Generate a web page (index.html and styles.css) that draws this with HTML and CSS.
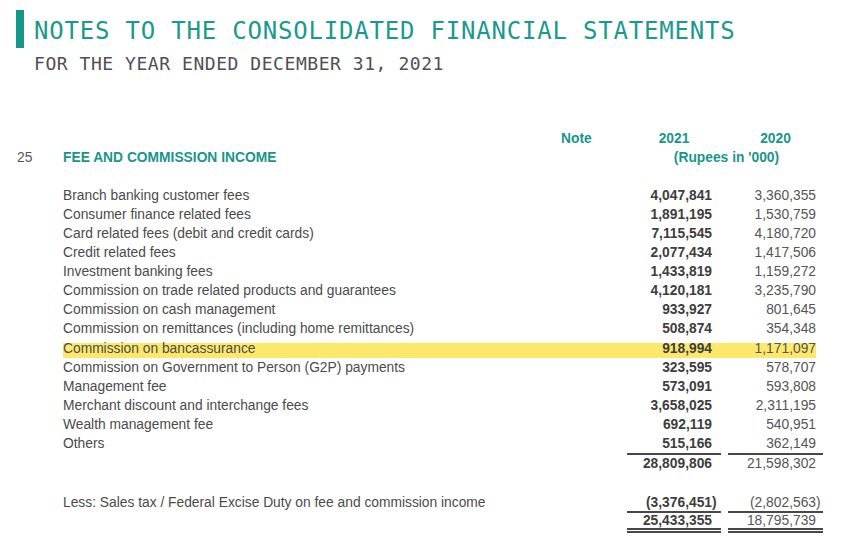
FILE: index.html
```html
<!DOCTYPE html>
<html>
<head>
<meta charset="utf-8">
<link rel="stylesheet" href="styles.css">
</head>
<body>
<div class="page">
  <header class="head">
    <div class="bar"></div>
    <div class="titles">
      <h1 class="title">NOTES TO THE CONSOLIDATED FINANCIAL STATEMENTS</h1>
      <div class="subtitle">FOR THE YEAR ENDED DECEMBER 31, 2021</div>
    </div>
  </header>

  <section class="table">
    <div class="row h1row">
      <div class="note">Note</div>
      <div class="c1 th">2021</div>
      <div class="c2 th">2020</div>
    </div>
    <div class="row h2row">
      <div class="num">25</div>
      <div class="lbl sec">FEE AND COMMISSION INCOME</div>
      <div class="units">(Rupees in '000)</div>
    </div>

    <div class="body">
      <div class="row"><div class="lbl">Branch banking customer fees</div><div class="c1 b">4,047,841</div><div class="c2">3,360,355</div></div>
      <div class="row"><div class="lbl">Consumer finance related fees</div><div class="c1 b">1,891,195</div><div class="c2">1,530,759</div></div>
      <div class="row"><div class="lbl">Card related fees (debit and credit cards)</div><div class="c1 b">7,115,545</div><div class="c2">4,180,720</div></div>
      <div class="row"><div class="lbl">Credit related fees</div><div class="c1 b">2,077,434</div><div class="c2">1,417,506</div></div>
      <div class="row"><div class="lbl">Investment banking fees</div><div class="c1 b">1,433,819</div><div class="c2">1,159,272</div></div>
      <div class="row"><div class="lbl">Commission on trade related products and guarantees</div><div class="c1 b">4,120,181</div><div class="c2">3,235,790</div></div>
      <div class="row"><div class="lbl">Commission on cash management</div><div class="c1 b">933,927</div><div class="c2">801,645</div></div>
      <div class="row"><div class="lbl">Commission on remittances (including home remittances)</div><div class="c1 b">508,874</div><div class="c2">354,348</div></div>
      <div class="row hl"><div class="lbl">Commission on bancassurance</div><div class="c1 b">918,994</div><div class="c2">1,171,097</div></div>
      <div class="row"><div class="lbl">Commission on Government to Person (G2P) payments</div><div class="c1 b">323,595</div><div class="c2">578,707</div></div>
      <div class="row"><div class="lbl">Management fee</div><div class="c1 b">573,091</div><div class="c2">593,808</div></div>
      <div class="row"><div class="lbl">Merchant discount and interchange fees</div><div class="c1 b">3,658,025</div><div class="c2">2,311,195</div></div>
      <div class="row"><div class="lbl">Wealth management fee</div><div class="c1 b">692,119</div><div class="c2">540,951</div></div>
      <div class="row"><div class="lbl">Others</div><div class="c1 b">515,166</div><div class="c2">362,149</div></div>
      <div class="row rule"><div class="c1 ln"></div><div class="c2 ln"></div></div>
      <div class="row tot"><div class="c1 b">28,809,806</div><div class="c2">21,598,302</div></div>

      <div class="row less"><div class="lbl">Less: Sales tax / Federal Excise Duty on fee and commission income</div><div class="c1 b"><span class="neg">(3,376,451)</span></div><div class="c2"><span class="neg">(2,802,563)</span></div></div>
      <div class="row rule"><div class="c1 ln"></div><div class="c2 ln"></div></div>
      <div class="row net"><div class="c1 b dbl">25,433,355</div><div class="c2 dbl">18,795,739</div></div>
    </div>
  </section>
</div>
</body>
</html>
```

FILE: styles.css
```css
html, body {
  margin: 0;
  padding: 0;
  background: #ffffff;
}

.page {
  padding-top: 10px;
  padding-left: 16px;
  width: 844px;
  font-family: "Liberation Sans", Arial, sans-serif;
}

.head {
  display: flex;
  align-items: flex-start;
}

.bar {
  width: 8px;
  height: 38px;
  background: #15968a;
  flex: none;
}

.titles {
  padding-top: 7px;
  margin-left: 10px;
}

.title {
  margin: 0;
  font-family: "DejaVu Sans Mono", monospace;
  font-weight: normal;
  font-size: 24px;
  line-height: 28px;
  letter-spacing: 0.8px;
  color: #1a998d;
  white-space: nowrap;
}

.subtitle {
  margin-top: 8px;
  font-family: "DejaVu Sans Mono", monospace;
  font-size: 18px;
  line-height: 22px;
  letter-spacing: 0.55px;
  color: #4f4f55;
  white-space: nowrap;
}

.table {
  margin-top: 53.5px;
  margin-left: 1px;
  font-size: 13.8px;
}

.row {
  display: grid;
  grid-template-columns: 46px 484px 80px 94px 7px 95px;
  height: 19.15px;
  line-height: 19.15px;
  white-space: nowrap;
}

.h1row, .h2row {
  height: 19px;
  line-height: 19px;
}

.body {
  margin-top: 19px;
}

.num {
  grid-column: 1;
  color: #555555;
}

.lbl {
  grid-column: 2 / 4;
  color: #4b4b4b;
}

.sec {
  font-weight: bold;
  color: #1a958b;
}

.note {
  grid-column: 3;
  padding-left: 14px;
  font-weight: bold;
  color: #1a958b;
}

.th {
  font-weight: bold;
  color: #1a958b;
  text-align: center;
  padding: 0;
}

.units {
  grid-column: 4 / 7;
  text-align: center;
  font-weight: bold;
  color: #1a958b;
  padding-left: 3px;
}

.c1 {
  grid-column: 4;
  text-align: right;
  padding-right: 9px;
  color: #555555;
}

.c2 {
  grid-column: 6;
  text-align: right;
  padding-right: 7px;
  color: #555555;
}

.h1row .c1, .h1row .c2 {
  text-align: center;
  padding-right: 0;
  color: #1a958b;
}

.b {
  font-weight: bold;
  color: #3d3d3d;
}

.neg {
  margin-right: -0.333em;
}

.hl {
  background: linear-gradient(#fce96b, #fce96b) no-repeat 46px 4px / 753px 15.5px;
}

.rule {
  height: 2px;
  line-height: 2px;
}

.ln {
  background: #484848;
  height: 2px;
  padding: 0;
}

.tot {
  height: 17px;
  line-height: 17px;
}

.less {
  margin-top: 22px;
  height: 17px;
  line-height: 17px;
}

.net {
  height: 20px;
  line-height: 15px;
}

.dbl {
  border-bottom: 5px double #484848;
}
```
